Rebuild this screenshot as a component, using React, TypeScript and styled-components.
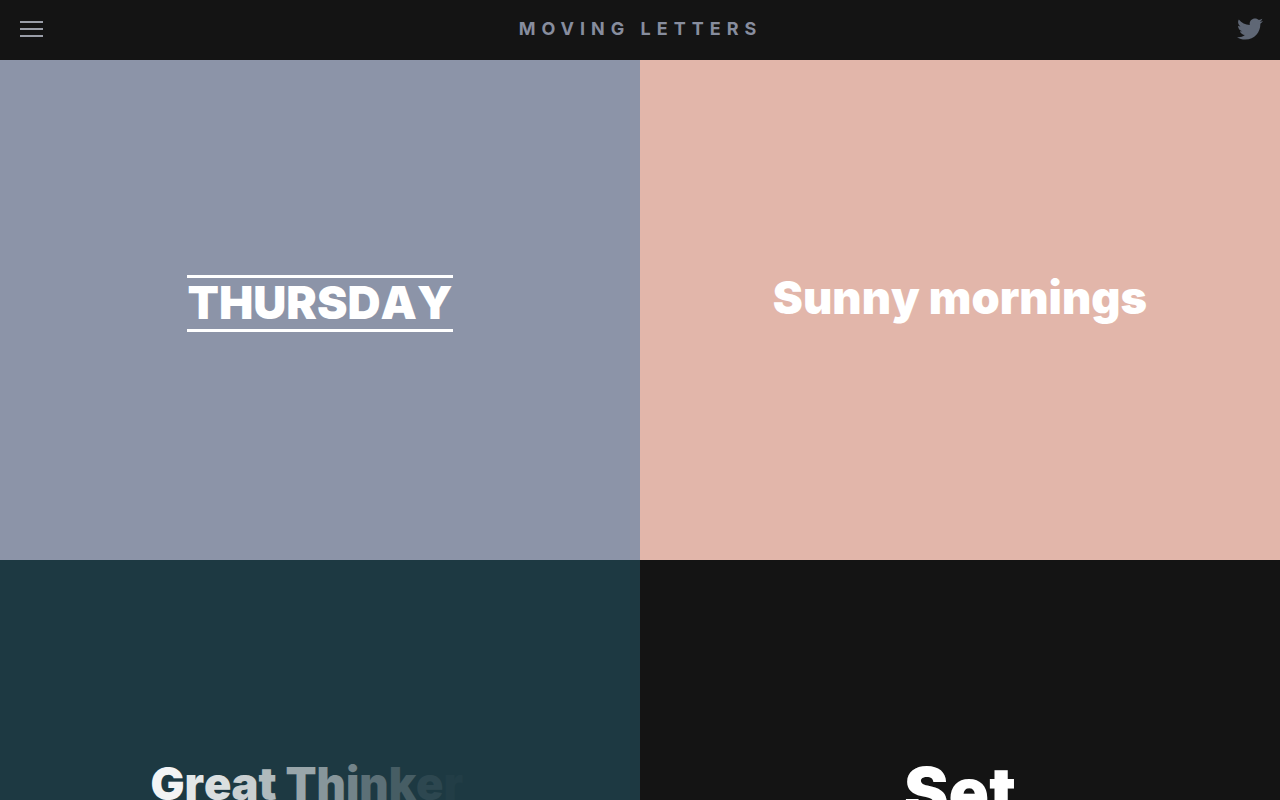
import styled, { createGlobalStyle } from "styled-components";
import { FaTwitter } from "react-icons/fa";

const GlobalStyle = createGlobalStyle`
  html, body {
    margin: 0;
    height: 100%;
    overflow: hidden;
    background-color: #141414;
    font-family: Inter, "Liberation Sans", sans-serif;
  }
`;

const Page = styled.div`
  width: 1280px;
  height: 800px;
  overflow: hidden;
`;

const Header = styled.header`
  height: 60px;
  box-sizing: border-box;
  display: flex;
  align-items: center;
  justify-content: space-between;
  padding: 0 17px 3px 20px;
  background-color: #141414;
`;

const MenuButton = styled.div`
  width: 23px;
  display: flex;
  flex-direction: column;
  gap: 5px;
  span {
    display: block;
    height: 2px;
    background-color: #9a9ea8;
  }
`;

const Logo = styled.h1`
  margin: 0 0 0 1px;
  font-size: 18px;
  font-weight: 700;
  letter-spacing: 6px;
  color: #878d9e;
`;

const TwitterLink = styled.a`
  display: flex;
  color: #5f6775;
  font-size: 26px;
`;

const Grid = styled.main`
  display: grid;
  grid-template-columns: 1fr 1fr;
  grid-auto-rows: 500px;
`;

const Cell = styled.section<{ $bg: string; $lift: number }>`
  display: flex;
  align-items: center;
  justify-content: center;
  padding-bottom: ${(props) => props.$lift}px;
  box-sizing: border-box;
  background-color: ${(props) => props.$bg};
  color: #fff;
`;

const Letter = styled.span`
  display: inline-block;
  white-space: pre;
`;

const Thursday = styled.h2`
  margin: 0;
  padding: 1px 0.5px 2px;
  font-size: 45.8px;
  line-height: 48px;
  font-weight: 900;
  border-top: 3px solid #fff;
  border-bottom: 3px solid #fff;
`;

const Sunny = styled.h2`
  margin: 0;
  font-size: 45.2px;
  line-height: 1.2;
  font-weight: 900;
`;

const Thinkers = styled.h2`
  margin: 0;
  font-size: 45.2px;
  line-height: 1.2;
  font-weight: 900;
`;

const SetWord = styled.h2`
  margin: 0;
  font-size: 67px;
  line-height: 1.2;
  font-weight: 900;
`;

const split = (text: string) =>
  text.split("").map((letter, i) => <Letter key={i}>{letter}</Letter>);

const thinkers = "Great Thinkers";
const fade = [0.95, 0.88, 0.84, 0.76, 0.65, 0, 0.55, 0.47, 0.38, 0.28, 0.18, 0.07, 0.02, 0];

function App() {
  return (
    <Page>
      <GlobalStyle />
      <Header>
        <MenuButton>
          <span />
          <span />
          <span />
        </MenuButton>
        <Logo>MOVING LETTERS</Logo>
        <TwitterLink>
          <FaTwitter />
        </TwitterLink>
      </Header>
      <Grid>
        <Cell $bg="#8c94a8" $lift={13}>
          <Thursday>{split("THURSDAY")}</Thursday>
        </Cell>
        <Cell $bg="#e2b6aa" $lift={24}>
          <Sunny>{split("Sunny mornings")}</Sunny>
        </Cell>
        <Cell $bg="#1d3942" $lift={52}>
          <Thinkers>
            {thinkers.split("").map((letter, i) => (
              <Letter key={i} style={{ opacity: fade[i] }}>
                {letter}
              </Letter>
            ))}
          </Thinkers>
        </Cell>
        <Cell $bg="#141414" $lift={36}>
          <SetWord>{split("Set")}</SetWord>
        </Cell>
      </Grid>
    </Page>
  );
}

export default App;
